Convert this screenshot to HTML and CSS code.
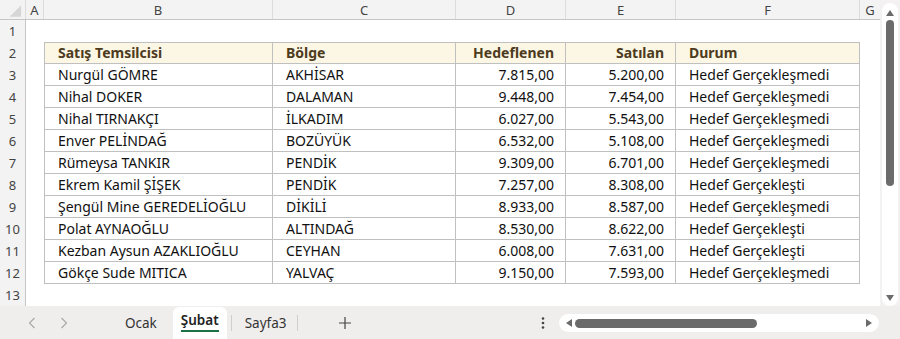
FILE: index.html
```html
<!DOCTYPE html>
<html lang="tr">
<head>
<meta charset="utf-8">
<title>Şubat</title>
<link rel="stylesheet" href="styles.css">
</head>
<body>
<div class="app">
  <div class="main">
    <div class="sheet">
      <div class="row colhead">
        <div class="rh corner"><svg width="26" height="20" viewBox="0 0 26 20"><polygon points="22,5 22,17 10,17" fill="#d6d6d6"/></svg></div>
        <div class="c a ch">A</div>
        <div class="c b ch">B</div>
        <div class="c cc ch">C</div>
        <div class="c d ch">D</div>
        <div class="c e ch">E</div>
        <div class="c f ch">F</div>
        <div class="c g ch">G</div>
      </div>
      <div class="row r1">
        <div class="rh">1</div>
      </div>
      <div class="row">
        <div class="rh">2</div><div class="c a"></div>
        <div class="c b t th">Satış Temsilcisi</div>
        <div class="c cc t th">Bölge</div>
        <div class="c d t th num">Hedeflenen</div>
        <div class="c e t th num">Satılan</div>
        <div class="c f t th">Durum</div>
      </div>
      <div class="row"><div class="rh">3</div><div class="c a"></div><div class="c b t">Nurgül GÖMRE</div><div class="c cc t">AKHİSAR</div><div class="c d t num">7.815,00</div><div class="c e t num">5.200,00</div><div class="c f t">Hedef Gerçekleşmedi</div></div>
      <div class="row"><div class="rh">4</div><div class="c a"></div><div class="c b t">Nihal DOKER</div><div class="c cc t">DALAMAN</div><div class="c d t num">9.448,00</div><div class="c e t num">7.454,00</div><div class="c f t">Hedef Gerçekleşmedi</div></div>
      <div class="row"><div class="rh">5</div><div class="c a"></div><div class="c b t">Nihal TIRNAKÇI</div><div class="c cc t">İLKADIM</div><div class="c d t num">6.027,00</div><div class="c e t num">5.543,00</div><div class="c f t">Hedef Gerçekleşmedi</div></div>
      <div class="row"><div class="rh">6</div><div class="c a"></div><div class="c b t">Enver PELİNDAĞ</div><div class="c cc t">BOZÜYÜK</div><div class="c d t num">6.532,00</div><div class="c e t num">5.108,00</div><div class="c f t">Hedef Gerçekleşmedi</div></div>
      <div class="row"><div class="rh">7</div><div class="c a"></div><div class="c b t">Rümeysa TANKIR</div><div class="c cc t">PENDİK</div><div class="c d t num">9.309,00</div><div class="c e t num">6.701,00</div><div class="c f t">Hedef Gerçekleşmedi</div></div>
      <div class="row"><div class="rh">8</div><div class="c a"></div><div class="c b t">Ekrem Kamil ŞİŞEK</div><div class="c cc t">PENDİK</div><div class="c d t num">7.257,00</div><div class="c e t num">8.308,00</div><div class="c f t">Hedef Gerçekleşti</div></div>
      <div class="row"><div class="rh">9</div><div class="c a"></div><div class="c b t">Şengül Mine GEREDELİOĞLU</div><div class="c cc t">DİKİLİ</div><div class="c d t num">8.933,00</div><div class="c e t num">8.587,00</div><div class="c f t">Hedef Gerçekleşmedi</div></div>
      <div class="row"><div class="rh">10</div><div class="c a"></div><div class="c b t">Polat AYNAOĞLU</div><div class="c cc t">ALTINDAĞ</div><div class="c d t num">8.530,00</div><div class="c e t num">8.622,00</div><div class="c f t">Hedef Gerçekleşti</div></div>
      <div class="row"><div class="rh">11</div><div class="c a"></div><div class="c b t">Kezban Aysun AZAKLIOĞLU</div><div class="c cc t">CEYHAN</div><div class="c d t num">6.008,00</div><div class="c e t num">7.631,00</div><div class="c f t">Hedef Gerçekleşti</div></div>
      <div class="row"><div class="rh">12</div><div class="c a"></div><div class="c b t">Gökçe Sude MITICA</div><div class="c cc t">YALVAÇ</div><div class="c d t num">9.150,00</div><div class="c e t num">7.593,00</div><div class="c f t">Hedef Gerçekleşmedi</div></div>
      <div class="row r13"><div class="rh">13</div></div>
    </div>
    <div class="vscroll">
      <div class="vtrack">
        <svg class="arr" width="10" height="8" viewBox="0 0 10 8"><polygon points="5,1 9,7 1,7" fill="#6b6b6b"/></svg>
        <div class="vthumb"></div>
        <div class="vspace"></div>
        <svg class="arr" width="10" height="8" viewBox="0 0 10 8"><polygon points="1,1 9,1 5,7" fill="#6b6b6b"/></svg>
      </div>
    </div>
  </div>
  <div class="tabbar">
    <div class="nav">
      <svg class="navbtn" width="8" height="12" viewBox="0 0 8 12"><path d="M6.5 1 L1.5 6 L6.5 11" fill="none" stroke="#a9a9a9" stroke-width="1.2"/></svg>
      <svg class="navbtn" width="8" height="12" viewBox="0 0 8 12"><path d="M1.5 1 L6.5 6 L1.5 11" fill="none" stroke="#a9a9a9" stroke-width="1.2"/></svg>
    </div>
    <div class="tabs">
      <div class="tab">Ocak</div>
      <div class="tab active"><span class="lbl">Şubat</span></div>
      <div class="sep"></div>
      <div class="tab">Sayfa3</div>
      <div class="sep"></div>
      <div class="add"><svg width="14" height="14" viewBox="0 0 14 14"><path d="M7 1v12M1 7h12" stroke="#444" stroke-width="1.2"/></svg></div>
    </div>
    <div class="more"><svg width="4" height="14" viewBox="0 0 4 14"><circle cx="2" cy="2.5" r="1.3" fill="#444"/><circle cx="2" cy="7" r="1.3" fill="#444"/><circle cx="2" cy="11.5" r="1.3" fill="#444"/></svg></div>
    <div class="hscroll">
      <svg width="8" height="10" viewBox="0 0 8 10"><polygon points="1,5 7,1 7,9" fill="#6b6b6b"/></svg>
      <div class="hthumb"></div>
      <div class="hspace"></div>
      <svg width="8" height="10" viewBox="0 0 8 10"><polygon points="1,1 7,5 1,9" fill="#6b6b6b"/></svg>
    </div>
  </div>
</div>
</body>
</html>
```
FILE: styles.css
```css
* { box-sizing: border-box; }
html, body { margin: 0; padding: 0; }
body {
  width: 900px;
  height: 339px;
  overflow: hidden;
  background: #f0eded;
  font-family: "Noto Sans", "Open Sans", sans-serif;
}
.app { display: flex; flex-direction: column; width: 900px; height: 339px; }
.main { display: flex; height: 306px; }
.sheet { width: 880px; background: #fff; display: flex; flex-direction: column; overflow: hidden; }
.row { display: flex; height: 22px; flex: none; }
.colhead { height: 20px; background: #f3f3f3; border-bottom: 1px solid #c6c6c6; }
.r1 { height: 21.5px; }
.r13 { flex: 1; height: auto; }
.rh {
  width: 26px; flex: none;
  background: #f3f3f3;
  border-right: 1px solid #c6c6c6;
  color: #444;
  font-size: 13px;
  display: flex; align-items: center; justify-content: center;
}
.corner { border-right: 1px solid #dcdcdc; padding: 0; }
.c { flex: none; height: 100%; }
.a { width: 18px; }
.b { width: 229px; }
.cc { width: 183px; }
.d { width: 110px; }
.e { width: 110px; }
.f { width: 184px; }
.g { width: 20px; }
.ch {
  color: #444;
  font-size: 13px;
  display: flex; align-items: center; justify-content: center;
  border-right: 1px solid #dcdcdc;
}
.ch.g { border-right: none; }
.t {
  font-size: 14px;
  color: #111;
  padding: 0 11px 0 13px;
  display: flex; align-items: center;
  white-space: nowrap;
  border-right: 1px solid #c0c0c0;
  border-bottom: 1px solid #c0c0c0;
}
.t.b { border-left: 1px solid #c0c0c0; }
.th {
  background: #fcf7e4;
  font-weight: 700;
  color: #4d3b1e;
  border-top: 1px solid #c0c0c0;
}
.num { justify-content: flex-end; }
.vscroll { width: 20px; background: #f3f1f1; padding: 3px 2px 0 2px; }
.vtrack {
  background: #fff; border-radius: 8px; height: 303px;
  display: flex; flex-direction: column; align-items: center;
  padding: 6px 0 4px;
}
.arr { flex: none; }
.vthumb { width: 8px; height: 166px; background: #6b6b6b; border-radius: 4px; margin-top: 3px; }
.vspace { flex: 1; }
.tabbar { height: 33px; display: flex; align-items: stretch; }
.nav { width: 113px; display: flex; align-items: center; gap: 24px; padding-left: 28px; }
.navbtn { flex: none; }
.tabs { display: flex; align-items: center; }
.tab { font-size: 13.5px; color: #333; padding: 0 12px; height: 100%; display: flex; align-items: center; }
.tab.active {
  background: #fff; border-radius: 6px 6px 0 0; font-weight: 600; color: #222;
  padding: 0 8px; margin-left: 4px; margin-right: 4px; height: 32px; align-self: flex-end;
}
.tab.active .lbl { border-bottom: 2px solid #1e7145; padding-bottom: 1px; margin-top: -4px; line-height: 18px; }
.tab + .sep + .tab { padding-left: 13px; padding-right: 10px; }
.sep { width: 1px; height: 16px; background: #cfcfcf; }
.add { padding: 0 40px; display: flex; align-items: center; height: 100%; }
.more { width: 16px; display: flex; align-items: center; justify-content: center; margin-left: 143px; }
.hscroll {
  margin-left: 8px; margin-top: 8px; height: 18px; width: 320px;
  background: #fff; border-radius: 9px;
  display: flex; align-items: center; padding: 0 6px;
}
.hthumb { width: 182px; height: 9px; background: #6b6b6b; border-radius: 5px; margin-left: 2px; }
.hspace { flex: 1; }
```
